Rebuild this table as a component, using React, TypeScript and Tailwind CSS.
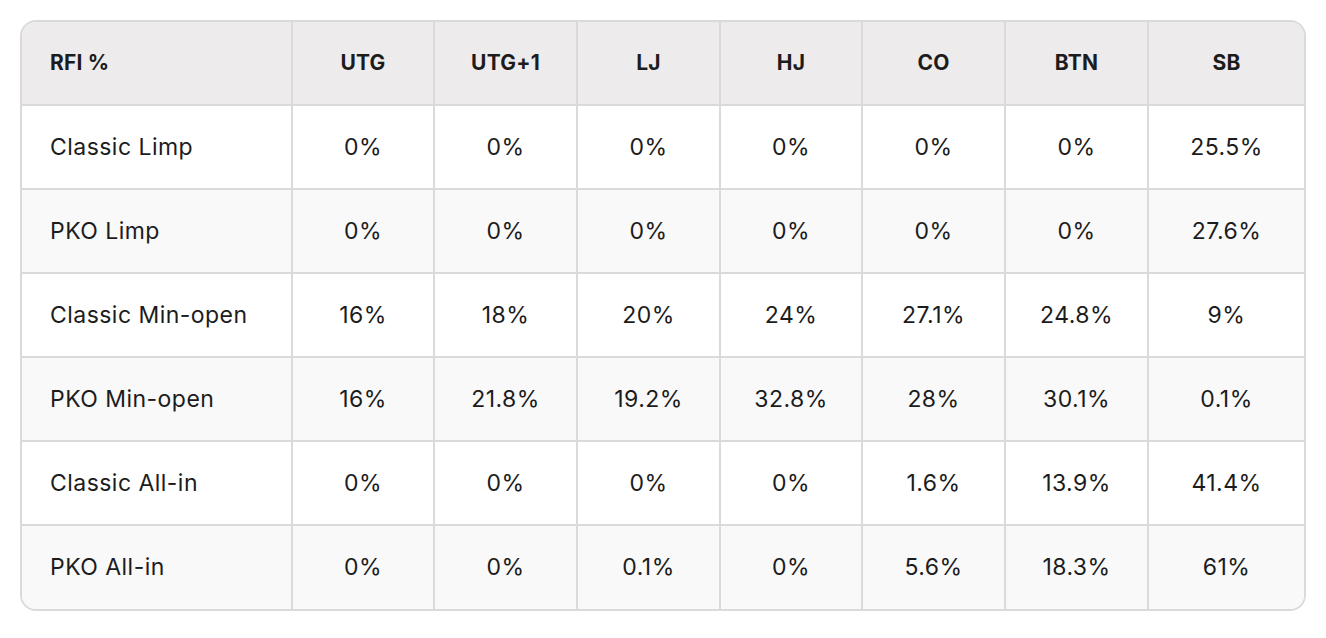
const headers = ["UTG", "UTG+1", "LJ", "HJ", "CO", "BTN", "SB"];

const rows: { name: string; values: string[] }[] = [
  { name: "Classic Limp", values: ["0%", "0%", "0%", "0%", "0%", "0%", "25.5%"] },
  { name: "PKO Limp", values: ["0%", "0%", "0%", "0%", "0%", "0%", "27.6%"] },
  { name: "Classic Min-open", values: ["16%", "18%", "20%", "24%", "27.1%", "24.8%", "9%"] },
  { name: "PKO Min-open", values: ["16%", "21.8%", "19.2%", "32.8%", "28%", "30.1%", "0.1%"] },
  { name: "Classic All-in", values: ["0%", "0%", "0%", "0%", "1.6%", "13.9%", "41.4%"] },
  { name: "PKO All-in", values: ["0%", "0%", "0.1%", "0%", "5.6%", "18.3%", "61%"] },
];

const cols = "grid grid-cols-[271px_142px_143px_143px_142px_143px_143px_155px]";

export default function App() {
  return (
    <div
      className="min-h-screen bg-white p-[20px] text-[#1c1c1c]"
      style={{ fontFamily: "Inter, 'Noto Sans', sans-serif" }}
    >
      <div className="w-[1286px] overflow-hidden rounded-2xl border-2 border-[#dadada]">
        <div className={`${cols} h-[84px] bg-[#edebec] text-[21px] font-bold tracking-[0.01em]`}>
          <div className="flex items-center border-r-2 border-b-2 border-[#dadada] pl-[28px]">RFI %</div>
          {headers.map((h, i) => (
            <div
              key={h}
              className={
                "flex items-center justify-center border-b-2 border-[#dadada]" +
                (i < headers.length - 1 ? " border-r-2" : "")
              }
            >
              {h}
            </div>
          ))}
        </div>
        {rows.map((row, r) => {
          const last = r === rows.length - 1;
          return (
            <div
              key={row.name}
              className={
                `${cols} text-[23px] tracking-[0.02em] ` +
                (r % 2 === 0 ? "bg-white" : "bg-[#f9f9f9]") +
                (last ? " h-[83px]" : " h-[84px]")
              }
            >
              <div
                className={
                  "flex items-center border-r-2 border-[#dadada] pl-[28px]" + (last ? "" : " border-b-2")
                }
              >
                {row.name}
              </div>
              {row.values.map((v, i) => (
                <div
                  key={i}
                  className={
                    "flex items-center justify-center border-[#dadada]" +
                    (i < row.values.length - 1 ? " border-r-2" : "") +
                    (last ? "" : " border-b-2")
                  }
                >
                  {v}
                </div>
              ))}
            </div>
          );
        })}
      </div>
    </div>
  );
}
